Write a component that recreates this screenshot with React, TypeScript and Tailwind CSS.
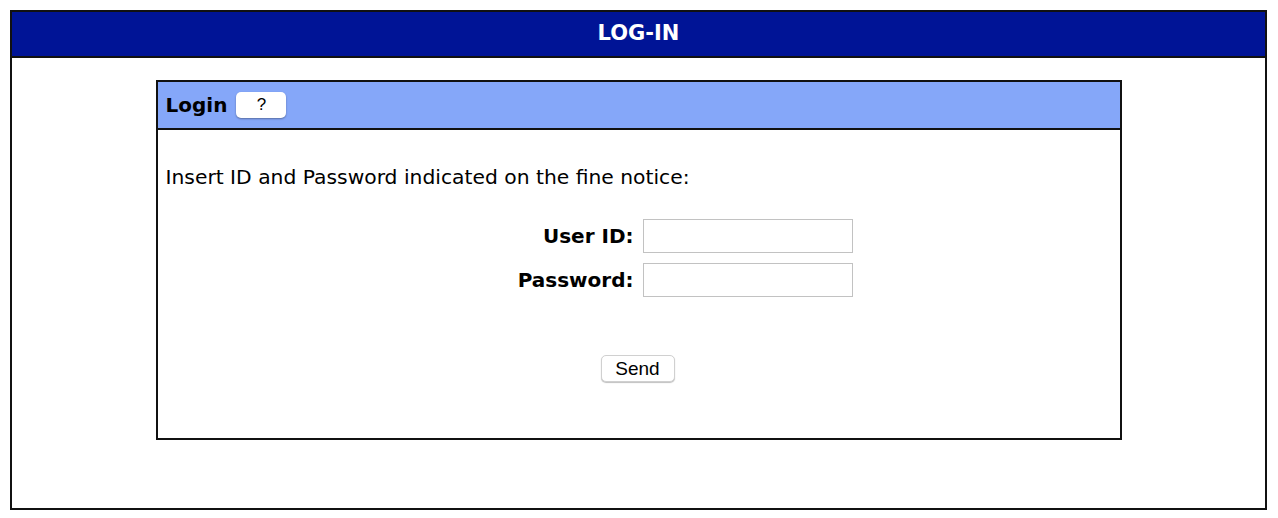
import React from 'react';

export default function App() {
  return (
    <div className="w-[1278px] h-[518px] bg-white p-[10px]" style={{ fontFamily: '"DejaVu Sans", Verdana, sans-serif' }}>
      <div className="h-[500px] w-[1257px] border-2 border-[#111]">
        <div className="h-[46px] bg-[#001496] border-b-2 border-[#111] flex items-center justify-center text-white font-bold text-[21px]">
          LOG-IN
        </div>
        <div className="pt-[22px] flex justify-center">
          <div className="w-[966px] h-[360px] border-2 border-[#111]">
            <div className="h-[48px] bg-[#85a7f9] border-b-2 border-[#111] flex items-center px-[8px] gap-[9px]">
              <span className="font-bold text-[20px] text-black">Login</span>
              <button className="w-[50px] h-[26px] bg-white rounded-[5px] text-[17px] text-black shadow-[0_1px_2px_rgba(0,0,0,0.35)]" style={{ fontFamily: '"Liberation Sans", Arial, sans-serif' }}>?</button>
            </div>
            <div className="px-[8px] pt-[35px] text-[20.3px] leading-[24px] text-black">
              Insert ID and Password indicated on the fine notice:
            </div>
            <div className="grid grid-cols-[476px_210px] gap-x-[9px] gap-y-[10px] items-center mt-[30px]">
              <label className="text-right font-bold text-[20px]">User ID:</label>
              <input className="h-[34px] border border-[#c2c2c2] outline-none" />
              <label className="text-right font-bold text-[20px]">Password:</label>
              <input type="password" className="h-[34px] border border-[#c2c2c2] outline-none" />
            </div>
            <div className="flex justify-center mt-[58px] pr-[2px]">
              <button className="w-[74px] h-[27px] bg-white rounded-[5px] border border-[#d0d0d0] text-[19px] leading-none text-black shadow-[0_1px_1px_rgba(0,0,0,0.25)]" style={{ fontFamily: '"Liberation Sans", Arial, sans-serif' }}>Send</button>
            </div>
          </div>
        </div>
      </div>
    </div>
  );
}
